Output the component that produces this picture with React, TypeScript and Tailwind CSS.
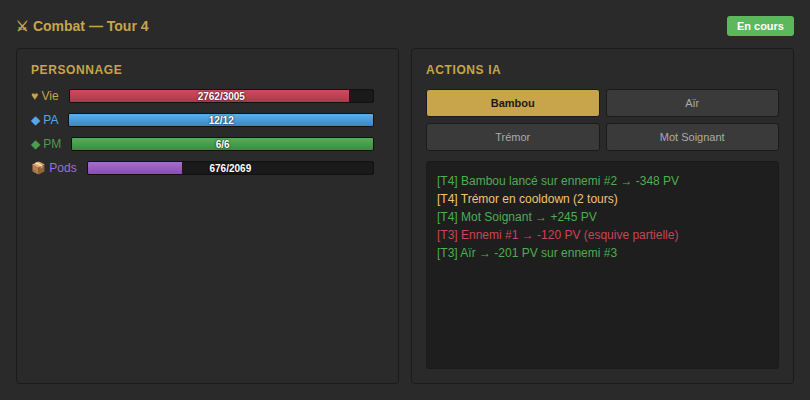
export default function App() {
  const stats = [
    { label: "♥ Vie", value: "2762/3005", pct: 92, color: "text-[#c8a44a]", fill: "bg-gradient-to-b from-[#cf4a5e] to-[#ab3a4a]" },
    { label: "◆ PA", value: "12/12", pct: 100, color: "text-[#55a8e5]", fill: "bg-gradient-to-b from-[#5cb0ea] to-[#3f84c2]" },
    { label: "◆ PM", value: "6/6", pct: 100, color: "text-[#4a9e4e]", fill: "bg-gradient-to-b from-[#52b056] to-[#3e8b42]" },
    { label: "📦 Pods", value: "676/2069", pct: 33, color: "text-[#9b70d8]", fill: "bg-gradient-to-b from-[#a86cd0] to-[#8650ae]" },
  ];
  const actions = ["Bambou", "Aïr", "Trémor", "Mot Soignant"];
  const logs = [
    { t: "[T4] Bambou lancé sur ennemi #2 → -348 PV", c: "text-[#4caf50]" },
    { t: "[T4] Trémor en cooldown (2 tours)", c: "text-[#f0c674]" },
    { t: "[T4] Mot Soignant → +245 PV", c: "text-[#4caf50]" },
    { t: "[T3] Ennemi #1 → -120 PV (esquive partielle)", c: "text-[#cc4458]" },
    { t: "[T3] Aïr → -201 PV sur ennemi #3", c: "text-[#4caf50]" },
  ];
  return (
    <div className="w-[810px] h-[400px] bg-[#2a2a2a] p-4 flex flex-col overflow-hidden font-['Liberation_Sans',sans-serif]">
      <div className="h-5 flex items-center justify-between mb-3">
        <span className="text-[14px] font-bold text-[#c8a44a]">⚔ Combat — Tour 4</span>
        <span className="h-5 flex items-center px-[10px] rounded-[3px] bg-[#5cb85c] text-white text-[11px] font-bold">En cours</span>
      </div>
      <div className="flex-1 flex gap-3 min-h-0">
        <section className="flex-1 rounded border border-[#1a1a1a] p-[14px]">
          <h2 className="text-[12px] leading-[14px] font-bold tracking-[0.6px] text-[#c8a44a] mb-3">PERSONNAGE</h2>
          <div className="flex flex-col gap-[10px] pr-[10px]">
            {stats.map((s) => (
              <div key={s.label} className="flex items-center gap-[10px] h-[14px]">
                <span className={`text-[12px] whitespace-nowrap ${s.color}`}>{s.label}</span>
                <div className="relative flex-1 h-[14px] bg-[#1a1a1a] border border-[#111] rounded-[2px] overflow-hidden">
                  <div className={`h-full ${s.fill}`} style={{ width: `${s.pct}%` }} />
                  <span className="absolute inset-0 flex items-center justify-center text-[10px] font-bold text-white [text-shadow:0_0_2px_#000]">{s.value}</span>
                </div>
              </div>
            ))}
          </div>
        </section>
        <section className="flex-1 rounded border border-[#1a1a1a] p-[14px] flex flex-col">
          <h2 className="text-[12px] leading-[14px] font-bold tracking-[0.6px] text-[#c8a44a] mb-3">ACTIONS IA</h2>
          <div className="grid grid-cols-2 gap-[6px] mb-[10px]">
            {actions.map((a, i) => (
              <button key={a} className={`h-7 rounded-[3px] border border-[#1a1a1a] text-[11px] ${i === 0 ? "bg-[#c8a44a] text-[#1a1a1a] font-bold" : "bg-[#3a3a3a] text-[#aaaaaa]"}`}>{a}</button>
            ))}
          </div>
          <div className="flex-1 bg-[#1e1e1e] border border-[#1a1a1a] rounded-[3px] px-[10px] py-[10px] text-[12px] leading-[18px]">
            {logs.map((l, i) => (
              <div key={i} className={l.c}>{l.t}</div>
            ))}
          </div>
        </section>
      </div>
    </div>
  );
}
